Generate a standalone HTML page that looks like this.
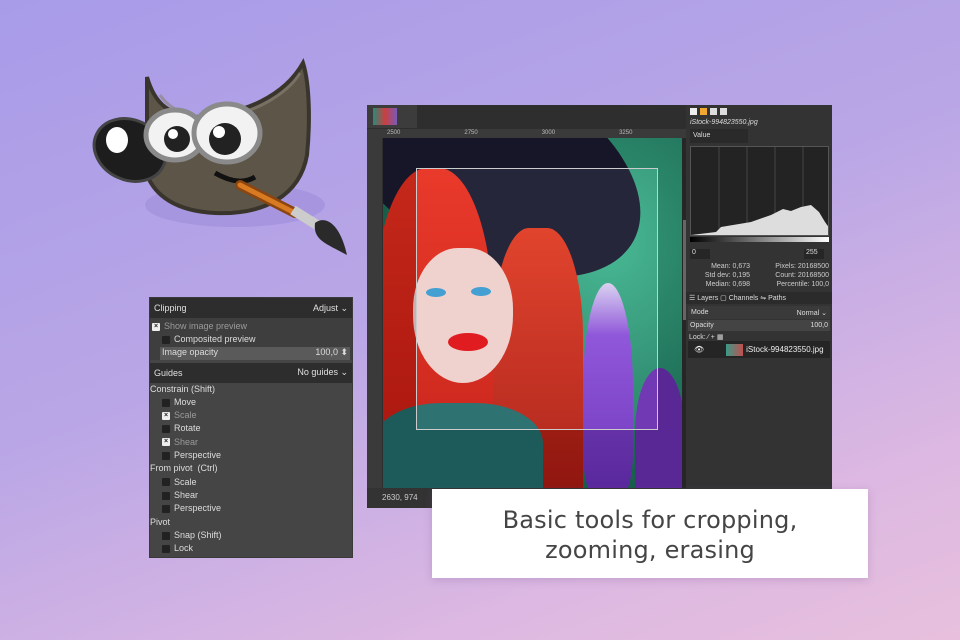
<!DOCTYPE html>
<html><head><meta charset="utf-8"><style>
*{margin:0;padding:0;box-sizing:border-box}
body{width:960px;height:640px;overflow:hidden;position:relative;font-family:"Liberation Sans",sans-serif;
background:linear-gradient(160deg,#a89be8 0%,#b9a6e6 45%,#dcb8e2 80%,#e8c0dd 100%)}
.abs{position:absolute}
.lp{left:149px;top:297px;width:204px;height:261px;background:#454545;color:#ddd;font-size:9px;border:1px solid #3a3a3a}
.lp .hd{height:20px;background:#2d2d2d;display:flex;justify-content:space-between;align-items:center;padding:0 4px;color:#e0e0e0}
.row{height:13.3px;line-height:13.3px;white-space:nowrap;display:flex;align-items:center}
.cb{display:inline-block;width:8px;height:8px;background:#222;border-radius:1px;margin-right:4px;flex:none}
.cbx{background:#eee;color:#222;font-size:7px;line-height:8px;text-align:center;font-weight:bold}
.dim{color:#9a9a9a}
.rp{left:686px;top:105px;width:146px;height:385px;background:#333;color:#ccc;font-size:7px}
</style></head><body>

<!-- GIMP logo -->
<svg class="abs" style="left:85px;top:55px" width="275" height="205" viewBox="0 0 275 205">
<ellipse cx="150" cy="150" rx="90" ry="22" fill="#9a8ad8" opacity=".5"/>
<path d="M62 22 C70 50 85 60 110 62 C160 60 200 40 218 8 C225 30 225 70 222 100 C215 140 180 160 130 158 C90 156 70 140 62 120 Z" fill="#5c5548" stroke="#3a352c" stroke-width="4"/>
<path d="M75 40 C90 62 120 66 150 60 C180 52 205 35 215 18" fill="none" stroke="#8a8276" stroke-width="3" opacity=".6"/>
<ellipse cx="45" cy="95" rx="37" ry="30" transform="rotate(25 45 95)" fill="#1d1d1d" stroke="#444" stroke-width="3"/>
<ellipse cx="32" cy="85" rx="11" ry="13" fill="#fff"/>
<ellipse cx="90" cy="80" rx="29" ry="25" fill="#f2f2f2" stroke="#8a8a8a" stroke-width="5"/>
<ellipse cx="142" cy="78" rx="33" ry="29" fill="#f2f2f2" stroke="#8a8a8a" stroke-width="5"/>
<circle cx="92" cy="84" r="13" fill="#222"/><circle cx="88" cy="79" r="5" fill="#fff"/>
<circle cx="140" cy="84" r="16" fill="#222"/><circle cx="134" cy="77" r="6" fill="#fff"/>
<path d="M130 118 C148 128 160 128 170 122" fill="none" stroke="#111" stroke-width="5"/>
<path d="M155 130 L210 158" stroke="#8a4510" stroke-width="10" stroke-linecap="round"/>
<path d="M155 130 L210 158" stroke="#d77a22" stroke-width="5" stroke-linecap="round"/>
<path d="M208 155 L232 170" stroke="#ccc" stroke-width="10"/>
<path d="M230 168 C240 160 255 168 262 200 C240 188 228 185 230 168Z" fill="#2a2a2a"/>
</svg>

<!-- Canvas window -->
<div class="abs" style="left:367px;top:105px;width:323px;height:403px;background:#2e2e2e">
 <div class="abs" style="left:0;top:0;width:50px;height:23px;background:#3c3c3c"></div>
 <div class="abs" style="left:6px;top:3px;width:24px;height:17px;background:linear-gradient(90deg,#2a8a7a,#c84040,#7a5ab8)"></div>
 <div class="abs" style="left:0;top:24px;width:323px;height:9px;background:#3a3a3a;color:#bbb;font-size:6px;line-height:8px"><span style="margin-left:20px">2500</span><span style="margin-left:64px">2750</span><span style="margin-left:64px">3000</span><span style="margin-left:64px">3250</span></div>
 <div class="abs" style="left:0;top:33px;width:15px;height:352px;background:#3a3a3a"></div>
 <div class="abs" style="left:16px;top:33px;width:299px;height:350px;overflow:hidden;background:radial-gradient(ellipse at 75% 30%,#3fb58e,#1f7a60 60%,#15523f)">
  <div class="abs" style="left:-60px;top:-70px;width:330px;height:190px;border-radius:50%;background:#1b1b30;transform:rotate(28deg)"></div>
  <div class="abs" style="left:-10px;top:30px;width:120px;height:330px;border-radius:45% 45% 20% 20%;background:linear-gradient(180deg,#e83020,#c41810)"></div>
  <div class="abs" style="left:110px;top:90px;width:90px;height:270px;border-radius:40% 40% 0 0;background:linear-gradient(180deg,#e03a22,#a81a12)"></div>
  <div class="abs" style="left:30px;top:110px;width:100px;height:135px;border-radius:45% 45% 50% 50%;background:#efcfcc"></div>
  <div class="abs" style="left:43px;top:150px;width:20px;height:9px;border-radius:50%;background:#3a9bd0"></div>
  <div class="abs" style="left:88px;top:149px;width:20px;height:9px;border-radius:50%;background:#3a9bd0"></div>
  <div class="abs" style="left:65px;top:195px;width:40px;height:18px;border-radius:50%;background:#e01015"></div>
  <div class="abs" style="left:-10px;top:265px;width:170px;height:100px;border-radius:40% 40% 0 0;background:#236c6a"></div>
  <div class="abs" style="left:200px;top:145px;width:50px;height:210px;border-radius:50% 50% 20% 20%;background:linear-gradient(180deg,#d8d0f0,#8a4ed8 25%,#6a2fb8)"></div>
  <div class="abs" style="left:252px;top:230px;width:50px;height:130px;border-radius:50% 50% 0 0;background:#6a30b0"></div>
  <div class="abs" style="left:33px;top:30px;width:242px;height:262px;border:1px solid #ccc;background:rgba(255,255,255,.05);box-shadow:0 0 0 400px rgba(0,0,0,.15)"></div>
 </div>
 <div class="abs" style="left:315px;top:33px;width:8px;height:350px;background:#262626"></div>
 <div class="abs" style="left:316px;top:115px;width:6px;height:100px;background:#666"></div>
 <div class="abs" style="left:0;top:383px;width:323px;height:20px;background:#333;color:#ccc;font-size:8px;line-height:20px;padding-left:15px">2630, 974</div>
</div>

<!-- Right panel -->
<div class="abs rp">
 <div class="abs" style="left:4px;top:3px;display:flex;gap:3px"><i style="width:7px;height:7px;background:#eee"></i><i style="width:7px;height:7px;background:#f0a830"></i><i style="width:7px;height:7px;background:#ddd"></i><i style="width:7px;height:7px;background:#ddd"></i></div>
 <div class="abs" style="left:4px;top:14px;font-style:italic;color:#ddd">iStock-994823550.jpg</div>
 <div class="abs" style="left:4px;top:24px;width:58px;height:14px;background:#2a2a2a;padding:3px 3px;color:#ddd">Value</div>
 <div class="abs" style="left:4px;top:41px;width:139px;height:90px;background:#232323;border:1px solid #555;overflow:hidden">
  <svg width="139" height="90"><g stroke="#444"><line x1="28" y1="0" x2="28" y2="90"/><line x1="56" y1="0" x2="56" y2="90"/><line x1="84" y1="0" x2="84" y2="90"/><line x1="112" y1="0" x2="112" y2="90"/></g>
  <path d="M0 90 L0 88 L25 85 L30 80 L60 75 L80 68 L92 62 L100 64 L110 60 L120 58 L128 65 L134 75 L139 82 L139 90Z" fill="#ddd"/></svg>
 </div>
 <div class="abs" style="left:4px;top:132px;width:139px;height:5px;background:linear-gradient(90deg,#000,#fff)"></div>
 <div class="abs" style="left:4px;top:144px;width:20px;height:10px;background:#262626;color:#ddd;padding-left:2px">0</div>
 <div class="abs" style="left:118px;top:144px;width:20px;height:10px;background:#262626;color:#ddd;padding-left:2px">255</div>
 <div class="abs" style="left:4px;top:157px;line-height:9px;text-align:right;width:60px;white-space:nowrap">Mean: 0,673<br>Std dev: 0,195<br>Median: 0,698</div>
 <div class="abs" style="left:70px;top:157px;line-height:9px;width:73px;text-align:right;white-space:nowrap">Pixels: 20168500<br>Count: 20168500<br>Percentile: 100,0</div>
 <div class="abs" style="left:0;top:187px;width:146px;height:12px;background:#2b2b2b;color:#ddd;padding:2px 3px">☰ Layers ▢ Channels ⇋ Paths</div>
 <div class="abs" style="left:2px;top:201px;width:142px;height:13px;background:#3a3a3a;padding:3px;color:#ddd">Mode<span style="float:right">Normal ⌄</span></div>
 <div class="abs" style="left:2px;top:215px;width:142px;height:11px;background:#444;padding:2px;color:#ddd">Opacity<span style="float:right">100,0</span></div>
 <div class="abs" style="left:3px;top:228px;color:#ddd">Lock: ⁄ + ▦</div>
 <div class="abs" style="left:2px;top:236px;width:142px;height:17px;background:#252525;color:#eee;font-size:8px;line-height:17px;padding-left:6px">👁<span style="display:inline-block;width:17px;height:12px;background:linear-gradient(90deg,#3a9a88,#c05050);vertical-align:middle;margin:0 3px 0 22px"></span>iStock-994823550.jpg</div>
</div>

<!-- Left panel -->
<div class="abs lp">
 <div class="hd"><span>Clipping</span><span>Adjust ⌄</span></div>
 <div style="background:#3e3e3e;padding-top:2px">
  <div class="row dim" style="padding-left:2px"><span class="cb cbx">×</span>Show image preview</div>
  <div class="row" style="padding-left:12px"><span class="cb"></span>Composited preview</div>
  <div class="row" style="margin:0 2px 0 10px;background:#5a5a5a;padding:0 2px;height:13px;justify-content:space-between"><span>Image opacity</span><span>100,0 ⬍</span></div>
 </div>
 <div class="hd" style="margin-top:3px"><span>Guides</span><span>No guides ⌄</span></div>
 <div class="row">Constrain (Shift)</div>
 <div class="row" style="padding-left:12px"><span class="cb"></span>Move</div>
 <div class="row dim" style="padding-left:12px"><span class="cb cbx">×</span>Scale</div>
 <div class="row" style="padding-left:12px"><span class="cb"></span>Rotate</div>
 <div class="row dim" style="padding-left:12px"><span class="cb cbx">×</span>Shear</div>
 <div class="row" style="padding-left:12px"><span class="cb"></span>Perspective</div>
 <div class="row">From pivot&nbsp; (Ctrl)</div>
 <div class="row" style="padding-left:12px"><span class="cb"></span>Scale</div>
 <div class="row" style="padding-left:12px"><span class="cb"></span>Shear</div>
 <div class="row" style="padding-left:12px"><span class="cb"></span>Perspective</div>
 <div class="row">Pivot</div>
 <div class="row" style="padding-left:12px"><span class="cb"></span>Snap (Shift)</div>
 <div class="row" style="padding-left:12px"><span class="cb"></span>Lock</div>
</div>

<!-- Caption -->
<div class="abs" style="left:432px;top:489px;width:436px;height:89px;background:#fff;box-shadow:0 2px 8px rgba(120,80,140,.25);color:#454545;font-size:24px;line-height:30px;text-align:center;padding-top:16px;font-family:'DejaVu Sans','Liberation Sans',sans-serif;letter-spacing:0.2px">Basic tools for cropping,<br>zooming, erasing</div>
</body></html>
